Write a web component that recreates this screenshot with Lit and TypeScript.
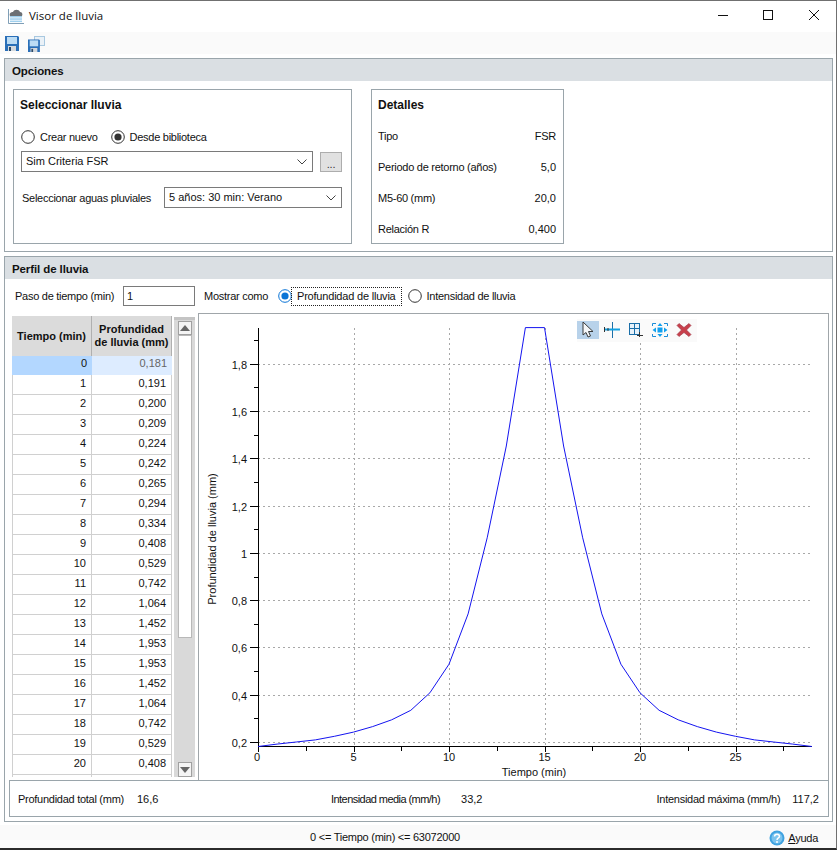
import { LitElement, html, css, svg } from "lit";
import { customElement } from "lit/decorators.js";

const DATA = [0.181,0.191,0.2,0.209,0.224,0.242,0.265,0.294,0.334,0.408,0.529,0.742,1.064,1.452,1.953,1.953,1.452,1.064,0.742,0.529,0.408,0.334,0.294,0.265,0.242,0.224,0.209,0.2,0.191,0.181];
const fmt = (v: number) => v.toFixed(3).replace(".", ",");
const W = 629, H = 466; // drawing area of the chart
const px = (t: number) => 59 + t * 19.1;
const py = (v: number) => 428 - (v - 0.2) * 236.4;

const floppy = (x = 0, y = 0, s = 1) => svg`<g transform="translate(${x} ${y}) scale(${s})">
  <path d="M0 0H13L14 1V15H0Z" fill="#2a6fb8"/>
  <rect x="2" y="1" width="10" height="7" fill="#bcdcf4"/>
  <rect x="3" y="10" width="8" height="5" fill="#d4d8dc"/>
  <rect x="4" y="11" width="2" height="4" fill="#2a4a6a"/></g>`;

@customElement("app-root")
export class AppRoot extends LitElement {
  static styles = css`
    :host { display: block; width: 838px; height: 850px; background: #fff; font-family: "Liberation Sans", Arial, sans-serif; font-size: 11px; letter-spacing: -0.27px; color: #111; }
    * { box-sizing: border-box; }
    .window { width: 837px; height: 850px; border-top: 1px solid #707070; border-right: 1px solid #707070; border-bottom: 2px solid #2b2b2b; display: flex; flex-direction: column; }
    .title { height: 31px; display: flex; align-items: center; padding-left: 8px; gap: 5px; background: #fff; flex: none; }
    .title > svg { margin-top: -2px; }
    .title span { font-family: "Open Sans", sans-serif; font-size: 11.5px; letter-spacing: 0; margin-top: -2px; }
    .controls { margin-left: auto; display: flex; }
    .controls svg { width: 45px; height: 31px; display: block; }
    .toolbar { height: 22px; background: #fafafa; display: flex; align-items: center; padding: 2px 0 0 5px; gap: 8px; flex: none; }
    .toolbar svg { display: block; }
    .body { padding: 4px 4px 0 4px; display: flex; flex-direction: column; gap: 4px; flex: none; }
    .panel { width: 829px; border: 1px solid #9aa5ab; }
    .panel-h { height: 22px; background: #dadfe3; font-weight: bold; display: flex; align-items: center; padding: 2px 0 0 7px; font-size: 11.5px; letter-spacing: -0.1px; }
    .opts { height: 170px; padding: 8px 8px 0 8px; display: flex; gap: 19px; }
    .box { border: 1px solid #9aa5ab; height: 155px; }
    .select-box { width: 339px; padding: 8px 9px 0 7px; }
    .detail-box { width: 193px; padding: 8px 7px 0 6px; }
    .box h3 { margin: 0 0 0 -1px; font-size: 12px; letter-spacing: 0; line-height: 14px; font-weight: bold; }
    .detail-box h3 { margin-left: 0; }
    .radios { display: flex; align-items: center; margin-top: 17px; height: 16px; }
    .radio { display: flex; align-items: center; gap: 5px; }
    .radio svg { display: block; flex: none; }
    .radios .radio + .radio { margin-left: 13px; }
    .combo { border: 1px solid #7a7a7a; height: 21px; display: flex; align-items: center; justify-content: space-between; padding: 0 4px 2px; background: #fff; letter-spacing: 0; }
    .combo svg { margin-top: 2px; }
    .row1 { display: flex; margin-top: 6px; gap: 7px; align-items: flex-end; }
    .row1 .combo { width: 292px; }
    .dots { width: 22px; height: 20px; border: 1px solid #adadad; background: #e1e1e1; display: flex; align-items: flex-end; justify-content: center; font-size: 11px; padding-bottom: 3px; line-height: 8px; color: #333; }
    .row2 { display: flex; align-items: center; justify-content: space-between; margin-top: 15px; padding-left: 1px; }
    .row2 .combo { width: 178px; }
    .details { margin-top: 17px; display: flex; flex-direction: column; gap: 17px; }
    .details div { display: flex; justify-content: space-between; line-height: 14px; }
    .num { letter-spacing: 0; }
    .profile { height: 566px; display: flex; flex-direction: column; }
    .params { height: 34px; display: flex; align-items: center; padding-left: 10px; flex: none; }
    .p-label { width: 108px; white-space: nowrap; }
    .input { width: 72px; height: 20px; border: 1px solid #7a7a7a; padding-left: 3px; display: flex; align-items: center; }
    .mostrar { width: 74px; margin-left: 9px; white-space: nowrap; }
    .focus { outline: 1px dotted #222; padding: 2px 5px; margin-left: -5px; line-height: 13px; letter-spacing: -0.2px; }
    .params .radio + .radio { margin-left: 7px; }
    .main { display: flex; padding-left: 7px; height: 467px; flex: none; }
    .table-wrap { width: 160px; height: 461px; margin-top: 3px; overflow: hidden; flex: none; letter-spacing: 0; }
    .t-row { display: grid; grid-template-columns: 80px 80px; height: 20px; }
    .t-row div { border-right: 1px solid #d0d0d0; border-bottom: 1px solid #d0d0d0; text-align: right; padding: 1px 5px 0 0; line-height: 14px; color: #111; }
    .t-row div:first-child { border-left: 1px solid #d0d0d0; }
    .t-head { height: 40px; background: #dbdbdb; }
    .t-head div { background: #dbdbdb; font-weight: bold; font-size: 11px; text-align: center; padding: 0; display: flex; align-items: center; justify-content: center; line-height: 13px; border: none; border-right: 1px solid #b0b0b0; }
    .t-head div:first-child { border: none; border-right: 1px solid #b0b0b0; }
    .t-row.sel { height: 19px; }
    .t-row.sel div { border: none; padding-top: 0; }
    .sel div:first-child { background: #b3d7ff; }
    .sel div:last-child { background: #ddecff; color: #666; }
    .scroll { width: 21px; height: 460px; margin: 4px 0 0 2px; background: #d9d9d9; border-top: 3px solid #c4c4c4; display: flex; flex-direction: column; justify-content: space-between; flex: none; position: relative; padding: 1px 3px 0 4px; }
    .thumb { position: absolute; top: 15px; left: 4px; right: 3px; height: 303px; background: #fff; border: 1px solid #b8b8b8; }
    .sbtn { height: 14px; background: #f4f4f4; border: 1px solid #a0a0a0; display: flex; align-items: center; justify-content: center; position: relative; }
    .sbtn.down { height: 15px; }
    .chart { width: 631px; height: 467px; margin-left: 3px; border: 1px solid #a0a6aa; border-bottom: none; position: relative; flex: none; background: #fff; }
    .chart svg.plot { display: block; }
    .plot text { font-family: "Liberation Sans", Arial, sans-serif; font-size: 11px; letter-spacing: 0; fill: #111; }
    .tools { position: absolute; left: 378px; top: 5px; display: flex; background: #fafafa; height: 23px; padding: 2px 1px 0 0; }
    .tool { width: 24px; height: 18px; display: flex; align-items: center; justify-content: center; }
    .tool.on { width: 22px; background: #b8d2ea; margin-right: 1px; }
    .tool svg { display: block; }
    .stats { height: 37px; margin: 0 3px 0 4px; border: 1px solid #9aa5ab; display: grid; grid-template-columns: 313px 324px 1fr; align-items: center; padding: 0 9px 0 8px; flex: none; }
    .stats > div { white-space: nowrap; }
    .stats > div:nth-child(2) { letter-spacing: -0.55px; }
    .stats > div:nth-child(3) { text-align: right; }
    .stats b { font-weight: normal; letter-spacing: 0; }
    .g1 { margin-left: 13px; }
    .g2 { margin-left: 21px; }
    .g3 { margin-left: 12px; }
    .status { margin-top: 3px; flex: 1; background: #fafafa; display: flex; align-items: center; position: relative; justify-content: center; padding: 0 66px 0 0; letter-spacing: -0.25px; }
    .help { position: absolute; right: 18px; top: 5px; display: flex; align-items: center; gap: 3px; }
    .help u { text-decoration: underline; }
    .help svg { display: block; }
  `;

  radio(on: boolean, blue = false) {
    const c = on && blue ? "#0a74d6" : "#333";
    return html`<svg width="14" height="14" viewBox="0 0 14 14"><circle cx="7" cy="7" r="6.3" fill="#fff" stroke="${c}"/>${on ? svg`<circle cx="7" cy="7" r="3.6" fill="${c}"/>` : ""}</svg>`;
  }

  chev() {
    return html`<svg width="12" height="8" viewBox="0 0 12 8"><path d="M1.500 1.500L6 6L10.500 1.500" fill="none" stroke="#444" stroke-width="1"/></svg>`;
  }

  plot() {
    const ys = [0.2, 0.4, 0.6, 0.8, 1, 1.2, 1.4, 1.6, 1.8];
    const minorYs = [0.3, 0.5, 0.7, 0.9, 1.1, 1.3, 1.5, 1.7, 1.9];
    const xs = [0, 5, 10, 15, 20, 25];
    const minorXs = [2.5, 7.5, 12.5, 17.5, 22.5, 27.5];
    const pts = DATA.map((v, i) => `${px(i).toFixed(1)},${py(v).toFixed(1)}`).join(" ");
    const yLabel = (v: number) => String(v).replace(".", ",");
    const ry = (v: number) => Math.round(py(v)) + 0.5;
    const rx = (t: number) => Math.round(px(t)) + 0.5;
    return html`<svg class="plot" width="${W}" height="${H}" viewBox="0 0 ${W} ${H}">
      ${ys.map(v => svg`<line x1="59" x2="613" y1="${ry(v)}" y2="${ry(v)}" stroke="#a8a8a8" stroke-dasharray="2 3"/>
        <line x1="51" x2="59" y1="${ry(v)}" y2="${ry(v)}" stroke="#000"/>
        <text x="48" y="${ry(v) + 4}" text-anchor="end">${yLabel(v)}</text>`)}
      ${minorYs.map(v => svg`<line x1="55" x2="59" y1="${ry(v)}" y2="${ry(v)}" stroke="#000"/>`)}
      ${xs.slice(1).map(t => svg`<line x1="${rx(t)}" x2="${rx(t)}" y1="14" y2="432" stroke="#a8a8a8" stroke-dasharray="2 3"/>`)}
      ${xs.map(t => svg`<line x1="${rx(t)}" x2="${rx(t)}" y1="432" y2="438" stroke="#000"/>
        <text x="${px(t) - (t === 0 ? 1 : 0)}" y="447" text-anchor="middle">${t}</text>`)}
      ${minorXs.map(t => svg`<line x1="${rx(t)}" x2="${rx(t)}" y1="432" y2="437" stroke="#000"/>`)}
      <line x1="59.500" x2="59.500" y1="14" y2="433" stroke="#000"/>
      <line x1="59" x2="613" y1="432.500" y2="432.500" stroke="#000"/>
      <polyline points="${pts}" fill="none" stroke="#1414f0" stroke-width="1"/>
      <text x="335" y="462" text-anchor="middle">Tiempo (min)</text>
      <text transform="translate(17 225) rotate(-90)" text-anchor="middle">Profundidad de lluvia (mm)</text>
    </svg>`;
  }

  render() {
    const rows = Array.from({ length: 21 }, (_, i) => i);
    return html`<div class="window">
      <div class="title">
        <svg width="16" height="16" viewBox="0 0 16 16"><path d="M2 8C1 5 3 4 5 4C6 1 11 1 12 4C14 4 15 6 14 8Z" fill="#6c7074"/><path d="M.5 1V15.500H16" fill="none" stroke="#5f86a4" stroke-width=".8"/><path d="M3 8V14.500M5 8V14.500M7 8V14.500M9 8V14.500M11 8V14.500M13 8V14.500" stroke="#3f9fdc" stroke-dasharray="1.500 .8"/></svg>
        <span>Visor de lluvia</span>
        <div class="controls">
          <svg viewBox="0 0 45 31"><path d="M17 14.500H27" stroke="#111"/></svg>
          <svg viewBox="0 0 45 31"><rect x="17.500" y="9.500" width="9" height="9" fill="none" stroke="#111"/></svg>
          <svg viewBox="0 0 45 31"><path d="M18 9L28 19M28 9L18 19" stroke="#111"/></svg>
        </div>
      </div>
      <div class="toolbar">
        <svg width="15" height="16" viewBox="0 0 15 16">${floppy(0, 0, 1)}</svg>
        <svg width="17" height="16" viewBox="0 0 17 16"><rect x="6.500" y=".5" width="10" height="9" fill="#eaf1f7" stroke="#a8c8e0"/>${floppy(0, 3.500, 0.85)}</svg>
      </div>
      <div class="body">
        <section class="panel">
          <div class="panel-h">Opciones</div>
          <div class="opts">
            <div class="box select-box">
              <h3>Seleccionar lluvia</h3>
              <div class="radios">
                <label class="radio">${this.radio(false)}Crear nuevo</label>
                <label class="radio">${this.radio(true)}Desde biblioteca</label>
              </div>
              <div class="row1">
                <div class="combo"><span>Sim Criteria FSR</span>${this.chev()}</div>
                <div class="dots">...</div>
              </div>
              <div class="row2">
                <span>Seleccionar aguas pluviales</span>
                <div class="combo"><span>5 años: 30 min: Verano</span>${this.chev()}</div>
              </div>
            </div>
            <div class="box detail-box">
              <h3>Detalles</h3>
              <div class="details">
                <div><span>Tipo</span><span>FSR</span></div>
                <div><span>Periodo de retorno (años)</span><span class="num">5,0</span></div>
                <div><span>M5-60 (mm)</span><span class="num">20,0</span></div>
                <div><span>Relación R</span><span class="num">0,400</span></div>
              </div>
            </div>
          </div>
        </section>
        <section class="panel profile">
          <div class="panel-h">Perfil de lluvia</div>
          <div class="params">
            <span class="p-label">Paso de tiempo (min)</span>
            <div class="input">1</div>
            <span class="mostrar">Mostrar como</span>
            <label class="radio">${this.radio(true, true)}<span class="focus">Profundidad de lluvia</span></label>
            <label class="radio">${this.radio(false)}Intensidad de lluvia</label>
          </div>
          <div class="main">
            <div class="table-wrap">
              <div class="t-row t-head"><div>Tiempo (min)</div><div>Profundidad<br />de lluvia (mm)</div></div>
              ${rows.map(i => html`<div class="t-row ${i === 0 ? "sel" : ""}"><div>${i}</div><div>${fmt(DATA[i])}</div></div>`)}
              <div class="t-row"><div></div><div></div></div>
            </div>
            <div class="scroll">
              <div class="thumb"></div>
              <div class="sbtn"><svg width="10" height="6" viewBox="0 0 10 6"><path d="M5 0L10 6H0Z" fill="#666"/></svg></div>
              <div class="sbtn down"><svg width="10" height="6" viewBox="0 0 10 6"><path d="M0 0H10L5 6Z" fill="#666"/></svg></div>
            </div>
            <div class="chart">
              ${this.plot()}
              <div class="tools">
                <div class="tool on"><svg width="16" height="18" viewBox="0 0 16 18"><path d="M3 1V14L6 11.500L8 16L10.500 15L8.500 10.500H13Z" fill="#f4f6f8" stroke="#3a3a3a"/></svg></div>
                <div class="tool"><svg width="18" height="18" viewBox="0 0 18 18"><path d="M9.500 1V17" stroke="#1b6fa8"/><path d="M2 8.500H17" stroke="#12a0e0" stroke-width="2"/><path d="M1.500 6V11M5 7V10" stroke="#333"/></svg></div>
                <div class="tool"><svg width="16" height="16" viewBox="0 0 16 16"><rect x="1.500" y="1.500" width="10" height="11" fill="#e8f2fa" stroke="#1a6ea8"/><path d="M6.500 2V12M2 6.500H11" stroke="#1a6ea8"/><path d="M9 13.500H15M11.500 10V15" stroke="#333"/></svg></div>
                <div class="tool"><svg width="18" height="16" viewBox="0 0 18 16"><path d="M1.500 4V1.500H5M13 1.500H16.500V4M16.500 12V14.500H13M5 14.500H1.500V12" fill="none" stroke="#1a8cd8"/><path d="M9 1L11.500 4H6.500ZM9 15L6.500 12H11.500ZM1.500 8L5 5.500V10.500ZM16.500 8L13 10.500V5.500Z" fill="#12a0ee"/><rect x="6.500" y="5.500" width="5" height="5" fill="#12a0ee"/></svg></div>
                <div class="tool"><svg width="16" height="16" viewBox="0 0 16 16"><path d="M3 1.500L8 5.500L13 1.500L15 3.500L10.500 8L15 12.500L13 14.500L8 10.500L3 14.500L1 12.500L5.500 8L1 3.500Z" fill="#c8404c" stroke="#9a3040" stroke-width=".6"/></svg></div>
              </div>
            </div>
          </div>
          <div class="stats">
            <div>Profundidad total (mm)<b class="g1">16,6</b></div>
            <div>Intensidad media (mm/h)<b class="g2">33,2</b></div>
            <div>Intensidad máxima (mm/h)<b class="g3">117,2</b></div>
          </div>
        </section>
      </div>
      <div class="status">
        <span>0 &lt;= Tiempo (min) &lt;= 63072000</span>
        <div class="help">
          <svg width="16" height="16" viewBox="0 0 16 16"><circle cx="8" cy="8" r="7.500" fill="#3fa2e0"/><circle cx="8" cy="8" r="5.500" fill="#7cc4ee"/><path d="M5.500 6.500C5.500 3.500 10.500 3.500 10.500 6.500C10.500 8 8 8 8 10" fill="none" stroke="#fff" stroke-width="1.500"/><circle cx="8" cy="12" r="1" fill="#fff"/></svg>
          <span><u>A</u>yuda</span>
        </div>
      </div>
    </div>`;
  }
}
